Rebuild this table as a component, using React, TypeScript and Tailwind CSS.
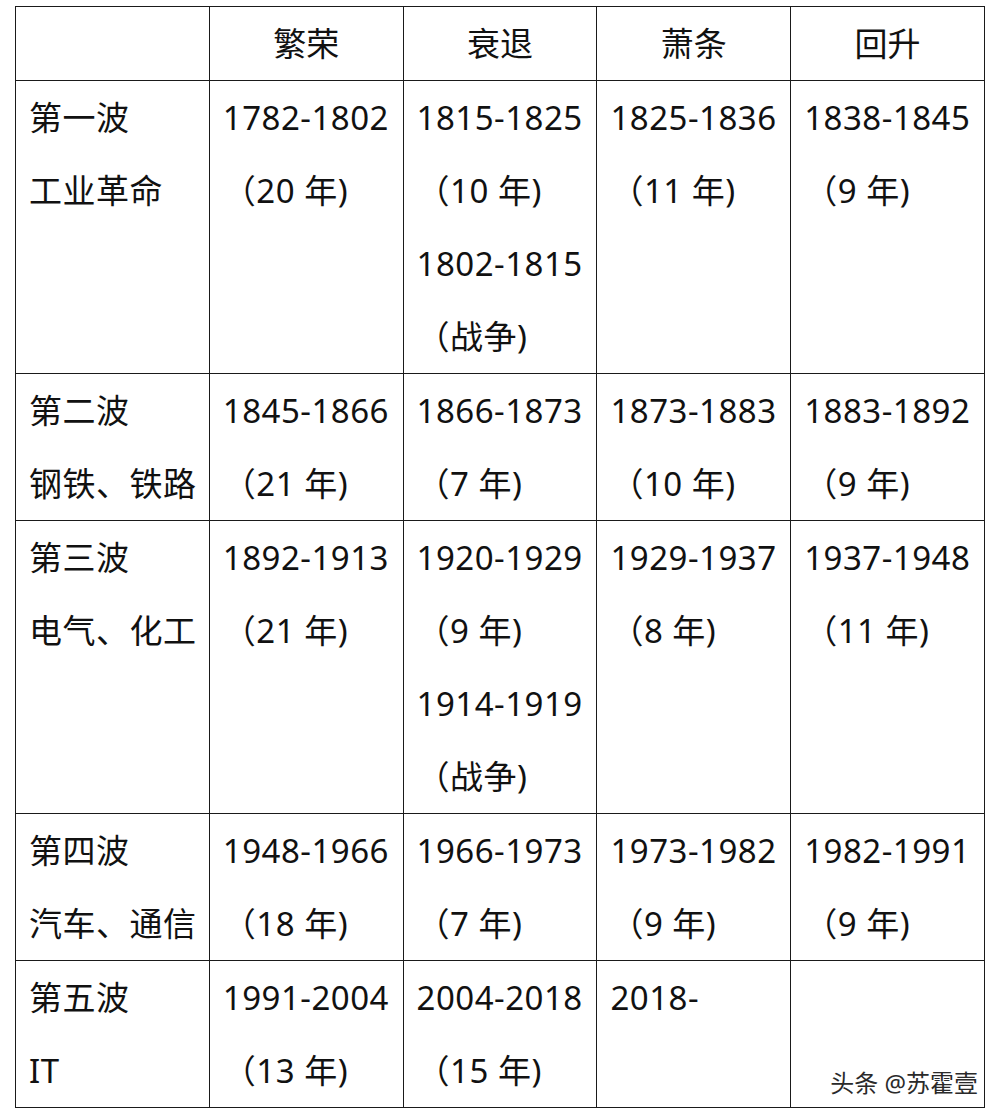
import React from "react";

const header = ["", "繁荣", "衰退", "萧条", "回升"];

const rows: string[][][] = [
  [
    ["第一波", "工业革命"],
    ["1782-1802", "（20 年)"],
    ["1815-1825", "（10 年)", "1802-1815", "（战争)"],
    ["1825-1836", "（11 年)"],
    ["1838-1845", "（9 年)"],
  ],
  [
    ["第二波", "钢铁、铁路"],
    ["1845-1866", "（21 年)"],
    ["1866-1873", "（7 年)"],
    ["1873-1883", "（10 年)"],
    ["1883-1892", "（9 年)"],
  ],
  [
    ["第三波", "电气、化工"],
    ["1892-1913", "（21 年)"],
    ["1920-1929", "（9 年)", "1914-1919", "（战争)"],
    ["1929-1937", "（8 年)"],
    ["1937-1948", "（11 年)"],
  ],
  [
    ["第四波", "汽车、通信"],
    ["1948-1966", "（18 年)"],
    ["1966-1973", "（7 年)"],
    ["1973-1982", "（9 年)"],
    ["1982-1991", "（9 年)"],
  ],
  [
    ["第五波", "IT"],
    ["1991-2004", "（13 年)"],
    ["2004-2018", "（15 年)"],
    ["2018-"],
    [],
  ],
];

export default function App() {
  return (
    <div
      className="w-[999px] h-[1116px] bg-white pt-[6px] pl-[15px] text-[#111]"
      style={{ fontFamily: '"Noto Sans", "Noto Sans CJK SC", sans-serif' }}
    >
      <div className="relative w-[970px]">
        <table className="w-[970px] table-fixed border-collapse">
          <thead>
            <tr>
              {header.map((h, i) => (
                <th
                  key={i}
                  className="border border-[#1a1a1a] font-normal text-[33px] leading-[73px] text-center p-0"
                >
                  {h}
                </th>
              ))}
            </tr>
          </thead>
          <tbody>
            {rows.map((row, r) => (
              <tr key={r}>
                {row.map((cell, c) => (
                  <td
                    key={c}
                    className="border border-[#1a1a1a] align-top pl-[13px] pr-0 py-0 text-[33px] leading-[73px] tracking-[0.5px] whitespace-nowrap"
                  >
                    {cell.map((line, k) => (
                      <div key={k}>{line}</div>
                    ))}
                  </td>
                ))}
              </tr>
            ))}
          </tbody>
        </table>
        <div className="absolute right-[7px] bottom-[13px] text-[24px] leading-none text-[#2a2a2a] [text-shadow:0_0_2px_#fff,0_0_2px_#fff]">
          头条 @苏霍壹
        </div>
      </div>
    </div>
  );
}
